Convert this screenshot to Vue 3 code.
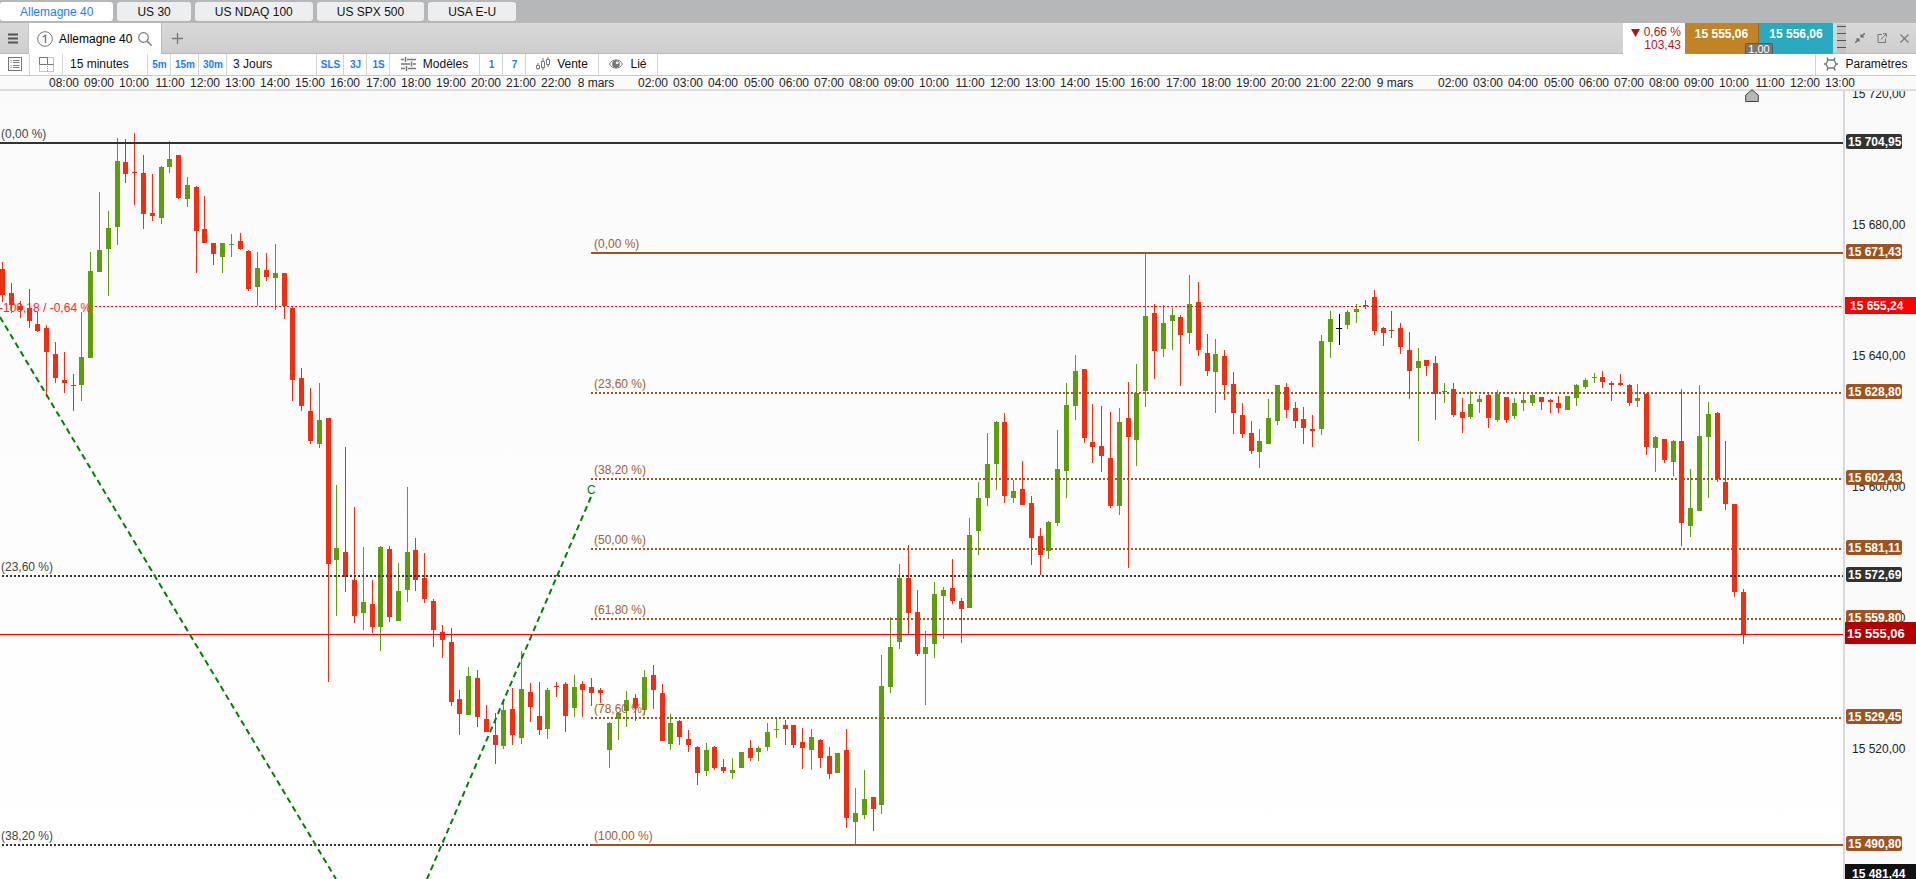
<script setup>
import { ref } from 'vue'

const watchlist = ['Allemagne 40', 'US 30', 'US NDAQ 100', 'US SPX 500', 'USA E-U']
const active = ref(0)

const PLOT_TOP = 91

/* colour, high, body top, body bottom, low */
const raw = `
r262,269,295,302 r283,293,305,313 r301,306,310,318 r289,308,321,328 r312,324,331,332 r325,328,352,397
r342,354,378,383 r352,380,383,393 r374,385,386,411 g312,357,385,401 g252,271,358,358 g192,250,272,272
g211,228,249,296 g138,161,227,245 r139,162,174,183 r133,172,173,205 r155,173,214,229 r174,213,216,221
g166,167,218,224 g141,159,167,173 r155,155,198,199 g177,185,199,207 r186,187,231,273 r196,229,243,243
r243,243,254,265 g243,243,257,273 g234,244,245,257 r233,241,249,250 r250,251,289,291 g252,268,287,306
r253,270,277,281 g244,273,278,310 r273,273,306,319 r307,308,380,401 r368,378,406,411 r388,411,441,444
g383,420,444,448 r418,418,564,682 g485,548,560,616 r447,552,577,592 r507,580,616,623 g547,602,613,630
r580,604,627,633 g546,547,627,651 r546,549,617,622 g563,591,621,621 g487,552,590,602 r538,550,580,591
r553,578,599,603 r599,601,630,647 r625,632,640,658 r628,642,702,706 r690,699,714,735 g667,676,715,715
r670,678,717,727 r705,719,732,732 r713,735,745,764 g699,710,746,749 r688,709,735,745 g651,689,738,744
r683,692,707,722 r682,716,730,735 g688,690,729,739 r682,686,687,697 r682,684,716,732 g675,687,708,717
r681,684,690,717 r678,687,693,706 r688,690,693,703 g722,723,750,768 g712,713,719,740 g691,700,711,727
r694,698,708,721 g670,677,710,715 r665,675,690,709 r684,693,741,741 g714,723,744,750 r720,721,737,745
r730,739,745,752 r746,747,773,785 g743,750,771,776 r746,747,768,770 r759,767,771,773 g758,770,773,779
g752,752,768,768 r740,748,758,761 g746,748,752,761 g723,732,747,751 g718,729,730,738 r720,725,729,745
r725,725,745,748 r728,742,748,769 g729,737,750,770 r739,740,758,768 r747,756,774,779 g753,753,773,773
r729,750,818,828 g788,813,822,844 g770,799,815,819 r797,797,809,831 g655,686,805,814 g617,647,687,693
g564,578,642,649 r545,578,613,635 r590,612,654,656 g631,647,654,705 g582,594,644,658 g587,590,596,639
r559,588,601,604 r598,601,609,643 g518,535,608,608 g482,498,531,555 g433,464,498,506 g421,422,464,490
r413,422,496,503 g480,491,498,503 r461,489,505,505 r496,503,538,565 r528,536,555,575 g521,522,551,559
g430,469,523,526 g383,405,471,498 g355,371,406,420 r369,369,438,443 r404,442,447,463 r406,446,456,472
r412,458,506,508 g408,422,506,515 r382,418,437,568 g364,393,440,466 g254,316,391,407 r304,313,351,379
g305,323,349,357 g308,315,321,350 r315,317,335,386 g275,304,333,344 r282,302,350,356 r334,353,371,376
g339,354,372,413 r350,356,385,400 r372,384,413,434 r403,415,434,438 r421,433,451,454 g429,441,452,468
g399,418,444,444 g385,385,421,425 r383,387,410,418 r402,408,421,428 r407,419,428,444 r415,429,431,447
g335,341,429,435 g311,319,342,358 k314,328,329,345 g310,312,325,329 g304,309,312,323 r300,305,306,309
r290,297,331,335 r327,328,333,346 r311,330,331,338 r323,328,347,354 r332,350,371,399 g348,361,368,441
r360,360,366,376 r356,363,394,420 g383,391,392,403 r383,389,415,417 r398,412,418,433 g391,404,417,419
g395,399,402,413 r393,395,418,428 g390,394,420,422 r397,397,420,423 g398,403,416,419 g393,400,403,411
g393,395,403,406 r397,397,402,410 r399,400,402,413 r396,403,408,413 g396,396,410,410 g384,385,398,406
g378,380,387,389 g373,377,378,383 r371,377,382,388 r381,383,385,401 r374,383,385,386 r384,385,403,406
g384,398,401,407 r393,394,447,455 g436,437,448,472 r439,439,460,463 g440,441,462,476 r389,441,523,546
g469,508,526,537 g385,436,511,511 g402,414,437,498 r412,413,479,482 r441,482,504,510 r504,504,592,597
r589,592,635,644`
const candles = raw.trim().split(/\s+/).map((s, i) => {
  const [high, top, bottom, low] = s.slice(1).split(',').map(Number)
  return { kind: s[0], x: Math.floor(2.76 + 8.7915 * i), high, top, bottom, low }
})

const hour = (h) => String(h).padStart(2, '0') + ':00'
const run = (x, from, to) =>
  Array.from({ length: to - from + 1 }, (_, i) => ({ x: Math.round(x + i * 35.17), t: hour(from + i) }))
const times = [
  ...run(64, 8, 22), { x: 596, t: '8 mars' },
  ...run(653, 2, 22), { x: 1395, t: '9 mars' },
  ...run(1453, 2, 13),
]

const darkLevels = [
  { y: 143, t: '(0,00 %)', solid: true, end: '100%' },
  { y: 576, t: '(23,60 %)', end: '100%' },
  { y: 845, t: '(38,20 %)', end: 591 },
]
const brownLevels = [
  { y: 253, t: '(0,00 %)', solid: true },
  { y: 393, t: '(23,60 %)' },
  { y: 479, t: '(38,20 %)' },
  { y: 549, t: '(50,00 %)' },
  { y: 619, t: '(61,80 %)' },
  { y: 718, t: '(78,60 %)' },
  { y: 845, t: '(100,00 %)', solid: true },
]

const ticks = [
  { y: 98, t: '15 720,00' }, { y: 229, t: '15 680,00' }, { y: 360, t: '15 640,00' },
  { y: 491, t: '15 600,00' }, { y: 622, t: '15 560,00' }, { y: 753, t: '15 520,00' },
]
const tags = [
  { y: 143, t: '15 704,95', dark: true }, { y: 253, t: '15 671,43' }, { y: 393, t: '15 628,80' },
  { y: 479, t: '15 602,43' }, { y: 549, t: '15 581,11' }, { y: 576, t: '15 572,69', dark: true },
  { y: 619, t: '15 559,80' }, { y: 718, t: '15 529,45' }, { y: 845, t: '15 490,80' },
]
</script>

<template>
  <div class="app">
    <nav class="watch">
      <button v-for="(w, i) in watchlist" :key="w" class="wtab" :class="{ on: i === active }" @click="active = i">{{ w }}</button>
    </nav>

    <header class="head">
      <button class="menu" aria-label="Menu">
        <svg width="10" height="11"><path d="M0 1.5h10M0 5.5h10M0 9.5h10" stroke="#555" stroke-width="2" /></svg>
      </button>
      <div class="tab">
        <svg width="16" height="16" viewBox="0 0 16 16">
          <circle cx="8" cy="8" r="7.3" fill="none" stroke="#777" />
          <path d="M5.8 6L8.5 4.2V12" fill="none" stroke="#777" stroke-width="1.4" />
        </svg>
        <span>Allemagne 40</span>
        <button class="icon" aria-label="Rechercher">
          <svg width="14" height="14" viewBox="0 0 14 14"><circle cx="5.5" cy="5.5" r="4.8" fill="none" stroke="#777" stroke-width="1.2" /><path d="M9 9l4.6 4.6" stroke="#777" stroke-width="1.5" /></svg>
        </button>
      </div>
      <button class="icon add" aria-label="Ajouter">
        <svg width="11" height="11"><path d="M5.5 0v11M0 5.5h11" stroke="#777" stroke-width="1.3" /></svg>
      </button>
      <div class="grow"></div>
      <div class="change">
        <span class="pct"><svg width="9" height="8"><path d="M0 0h9L4.5 8z" fill="#b71515" /></svg>0,66 %</span>
        <span>103,43</span>
      </div>
      <div class="deal">
        <button class="sell">15 555,06</button>
        <button class="buy">15 556,06</button>
        <span class="spread">1,00</span>
      </div>
      <div class="win">
        <svg class="grip" width="9" height="29"><rect width="9" height="29" fill="#c3c3c3" /><path d="M0 2.5h9M0 9.5h9M0 16.5h9M0 23.5h9" stroke="#555" /></svg>
        <button class="icon" aria-label="Réduire">
          <svg width="10" height="10" viewBox="0 0 10 10"><path d="M10 0L6.5 3.5M0 10l3.5-3.5" stroke="#666" stroke-width="1.4" /><path d="M5.5 .8v3.7h4zM4.5 9.2V5.5H.5z" fill="#666" /></svg>
        </button>
        <button class="icon" aria-label="Détacher">
          <svg width="10" height="10" viewBox="0 0 10 10"><path d="M5 1.500H1v8h7.500V5.500M4 6.500l5-5.500M6 .6h3.400V4" fill="none" stroke="#777" /></svg>
        </button>
        <button class="icon" aria-label="Fermer">
          <svg width="9" height="9" viewBox="0 0 9 9"><path d="M.5 .5l8 8M8.500 .5l-8 8" stroke="#777" stroke-width="1.100" /></svg>
        </button>
      </div>
    </header>

    <div class="tools">
      <button class="cell w29" aria-label="Liste">
        <svg width="14" height="14" viewBox="0 0 14 14"><rect x=".5" y=".5" width="13" height="13" fill="none" stroke="#777" /><path d="M5 3.500h6.500M5 5.500h6.500M5 8.500h6.500M5 10.500h6.500M2.500 3.500h1M2.500 5.500h1M2.500 8.500h1M2.500 10.500h1" stroke="#777" /></svg>
      </button>
      <button class="cell w33" aria-label="Disposition">
        <svg width="15" height="15" viewBox="0 0 15 15"><rect x=".5" y=".5" width="14" height="14" fill="none" stroke="#888" stroke-dasharray="1 1" /><path d="M8.500 7v8" stroke="#888" stroke-dasharray="1 1" /><path d="M.5 .5h8v7h-8zM8.500 7.500h6" fill="none" stroke="#777" /></svg>
      </button>
      <button class="cell text w85">15 minutes</button>
      <button class="cell quick w23">5m</button>
      <button class="cell quick w28">15m</button>
      <button class="cell quick w28">30m</button>
      <button class="cell text jours">3 Jours</button>
      <button class="cell quick w27">SLS</button>
      <button class="cell quick w23">3J</button>
      <button class="cell quick w23">1S</button>
      <button class="cell w90">
        <svg width="15" height="14" viewBox="0 0 15 14"><path d="M0 2.500h3M6 2.500h9M0 7h9M12 7h3M0 11.500h4M7 11.500h8" stroke="#777" stroke-width="1.400" /><path d="M4.500 0v5M10.500 4.500v5M5.500 9v5" stroke="#777" stroke-width="1.500" /></svg>
        Modèles
      </button>
      <button class="cell quick w23">1</button>
      <button class="cell quick w23">7</button>
      <button class="cell w73">
        <svg width="14" height="14" viewBox="0 0 14 14"><path d="M2 6v7M7 1v12M12 0v10" stroke="#777" /><path d="M.5 8.500h3v3h-3zM5.500 4.500h3v6h-3zM10.500 2.500h3v5h-3z" fill="#fff" stroke="#777" /></svg>
        Vente
      </button>
      <button class="cell w59">
        <svg width="14" height="10" viewBox="0 0 14 10"><path d="M.5 5C3-.5 11-.5 13.500 5 11 10.500 3 10.500 .5 5z" fill="#fff" stroke="#777" /><circle cx="7" cy="5" r="3.800" fill="#777" /><circle cx="8.200" cy="3.800" r="1.300" fill="#fff" /></svg>
        Lié
      </button>
      <div class="grow"></div>
      <button class="cell params">
        <svg width="14" height="14" viewBox="0 0 14 14"><path d="M4 3h6l2 4-2 4H4L2 7z" fill="none" stroke="#777" stroke-width="1.300" /><path d="M0 7h2M12 7h2M4 3L3 .6M10 3l1-2.400M4 11l-1 2.400M10 11l1 2.400" stroke="#777" stroke-width="1.500" /></svg>
        Paramètres
      </button>
    </div>

    <svg class="times">
      <text v-for="t in times" :key="t.x" :x="t.x" y="11" text-anchor="middle">{{ t.t }}</text>
    </svg>

    <main class="chart">
      <svg class="plot">
        <g :transform="`translate(0,${-PLOT_TOP})`">
          <g shape-rendering="crispEdges">
            <g v-for="(c, i) in candles" :key="i" :class="c.kind">
              <rect :x="c.x" :y="c.high" width="1" :height="c.low - c.high" />
              <rect :x="c.kind === 'k' ? c.x - 3 : c.x - 2" :y="c.top" :width="c.kind === 'k' ? 6 : 5" :height="c.bottom - c.top" />
            </g>
            <g class="dark">
              <line v-for="l in darkLevels" :key="l.y" x1="2" :x2="l.end" :y1="l.y" :y2="l.y" :class="{ dots: !l.solid }" />
              <line x1="0" x2="2" y1="143" y2="143" />
            </g>
            <g class="brown">
              <line v-for="l in brownLevels" :key="l.y" x1="591" x2="100%" :y1="l.y" :y2="l.y" :class="{ dots: !l.solid }" />
            </g>
            <line class="alert" x1="95" x2="100%" y1="306.5" y2="306.5" />
            <line class="last" x1="0" x2="100%" y1="634.5" y2="634.5" />
          </g>
          <path class="trend" d="M0 317L336 879M591 497L427 879" />
          <text v-for="l in darkLevels" :key="l.t" class="dark-t" x="1" :y="l.y - 5">{{ l.t }}</text>
          <text v-for="l in brownLevels" :key="l.t" class="brown-t" x="594" :y="l.y - 5">{{ l.t }}</text>
          <text class="alert-t" x="-1" y="312">-100,18 / -0,64 %</text>
          <text class="trend-t" x="587" y="494">C</text>
        </g>
      </svg>
      <svg class="prices">
        <g :transform="`translate(0,${-PLOT_TOP})`">
          <text v-for="t in ticks" :key="t.t" x="7" :y="t.y">{{ t.t }}</text>
          <g v-for="t in tags" :key="t.t" class="tag">
            <rect x="1" :y="t.y - 9" width="56" height="15" rx="2" :class="{ black: t.dark }" />
            <text x="3" :y="t.y + 3">{{ t.t }}</text>
          </g>
          <g class="tag">
            <rect class="red" x="-1" y="297" width="74" height="17" />
            <text x="5" y="310">15 655,24</text>
            <rect class="deep" x="-1" y="622" width="74" height="22" rx="2" />
            <text class="big" x="2" y="638">15 555,06</text>
            <rect class="ink" x="-1" y="864" width="74" height="20" />
            <text x="7" y="878">15 481,44</text>
          </g>
        </g>
      </svg>
      <svg class="marker" width="14" height="14" viewBox="0 0 14 14"><path d="M.7 12.500V6L7 .8 13.300 6v6.500z" fill="#b5b5b5" stroke="#444" /></svg>
    </main>
  </div>
</template>

<style>
html, body { margin: 0; overflow: hidden; }
</style>

<style scoped>
.app { height: 100vh; display: flex; flex-direction: column; overflow: hidden; font: 12px/16px "Liberation Sans", Arial, sans-serif; color: #111; background: #fafafa; }
button { font: inherit; color: inherit; border: 0; margin: 0; padding: 0; background: none; cursor: pointer; }
svg { display: block; flex: none; }
text { font-size: 12px; fill: #222; white-space: pre; }
.grow { flex: 1; }

.watch { flex: none; height: 23px; box-sizing: border-box; padding: 2px 0; display: flex; gap: 4px; background: #b6b7b8; }
.wtab { padding: 0 20px; border-radius: 3px; background: #edeef0; }
.wtab.on { background: #fff; color: #1a7cff; }

.head { flex: none; height: 31px; box-sizing: border-box; display: flex; align-items: stretch; background: linear-gradient(#d9d9d9, #cecece); border-bottom: 1px solid #b9b9b9; }
.menu { width: 29px; padding-left: 8px; box-sizing: border-box; border-right: 1px solid #c4c4c4; }
.tab { display: flex; align-items: center; gap: 6px; width: 133px; box-sizing: border-box; padding-left: 8px; background: #fff; border-right: 1px solid #bbb; margin-bottom: -1px; color: #000; white-space: nowrap; }
.icon { display: flex; align-items: center; }
.add { padding: 0 10px; }
.change { width: 62px; box-sizing: border-box; padding: 3px 4px 0 0; margin-bottom: -1px; background: #fff; color: #b71515; text-align: right; display: flex; flex-direction: column; line-height: 13px; }
.pct { display: flex; align-items: center; justify-content: flex-end; gap: 4px; }
.deal { position: relative; display: flex; margin-bottom: -1px; color: #fff; font-weight: bold; }
.sell, .buy { width: 74px; padding-bottom: 10px; }
.sell { background: #c08427; border-right: 1px solid #946a2a; box-sizing: border-box; }
.buy { background: #28abbf; }
.spread { position: absolute; left: 60px; bottom: 0; width: 28px; height: 11px; box-sizing: border-box; border: 1px solid #5a5a5a; border-bottom: 0; border-radius: 2px 2px 0 0; background: #777; font-size: 11px; line-height: 11px; font-weight: normal; text-align: center; }
.win { display: flex; align-items: center; width: 83px; box-sizing: border-box; padding: 0 7px 0 4px; justify-content: space-between; }
.grip { margin-right: -4px; }

.tools { flex: none; height: 22px; box-sizing: border-box; display: flex; background: #fff; border-bottom: 1px solid #c9cbca; }
.cell { display: flex; align-items: center; justify-content: center; gap: 7px; box-sizing: border-box; border-right: 1px solid #d4d4d4; padding-bottom: 1px; white-space: nowrap; }
.text { justify-content: flex-start; padding-left: 7px; }
.quick { color: #1a7cff; font-size: 10px; font-weight: bold; padding: 1px 0 0 1px; }
.w23 { width: 23px; }
.w27 { width: 27px; }
.w28 { width: 28px; }
.w29 { width: 30px; }
.w33 { width: 33px; }
.w59 { width: 59px; }
.w73 { width: 73px; }
.w85 { width: 85px; }
.w90 { width: 90px; }
.jours { width: 90px; padding-left: 6px; }
.params { width: 101px; border-right: 0; border-left: 1px solid #d4d4d4; }

.times { width: 100%; height: 13px; border-bottom: 2px solid #ddd; background: #fafafa; }
.chart { position: relative; flex: 1; min-height: 0; display: flex; }
.plot { flex: 1; min-width: 0; height: 100%; background: linear-gradient(#fafafa, #fff); border-right: 2px solid #d9d9d9; }
.prices { width: 71px; height: 100%; background: #fafafa; overflow: hidden; }
.marker { position: absolute; right: 157px; top: -2px; }

.r { fill: #f12e0f; }
.g { fill: #5e9e0b; }
.k { fill: #000; }
.dark line { stroke: #333; stroke-width: 2; }
.brown line { stroke: #9e5420; stroke-width: 2; }
.dark .dots, .brown .dots { stroke-dasharray: 2 2; }
.alert { stroke: #f00; stroke-dasharray: 2 2; }
.last { stroke: #f00; }
.trend { fill: none; stroke: #008000; stroke-width: 2; stroke-dasharray: 6 4; }
.dark-t { fill: #444; }
.brown-t { fill: #a0602f; }
.alert-t { fill: #f22; }
.trend-t { fill: #008000; }
.tag rect { fill: #9e5420; }
.tag rect.black { fill: #333; }
.tag rect.red { fill: #f00; }
.tag rect.deep { fill: #b00000; }
.tag rect.ink { fill: #111; }
.tag text { fill: #fff; font-weight: bold; }
.tag text.big { font-size: 13px; }
</style>
